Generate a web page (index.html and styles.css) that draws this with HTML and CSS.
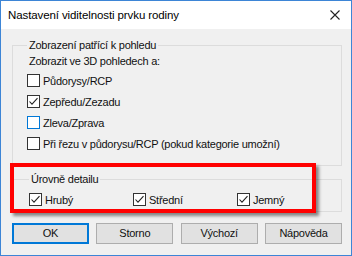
FILE: index.html
```html
<!DOCTYPE html>
<html lang="cs">
<head>
<meta charset="UTF-8">
<title>Nastavení viditelnosti prvku rodiny</title>
<link rel="stylesheet" href="styles.css">
</head>
<body>

<div class="window">
  <div class="titlebar">
    <span class="title">Nastavení viditelnosti prvku rodiny</span>
    <svg class="close" width="10" height="10" viewBox="0 0 10 10">
      <path d="M0.5 0.5 L9.5 9.5 M9.5 0.5 L0.5 9.5" stroke="#222" stroke-width="1.1" fill="none"/>
    </svg>
  </div>

  <div class="content">
    <fieldset class="group group-view">
      <legend>Zobrazení patřící k pohledu</legend>
      <div class="hint">Zobrazit ve 3D pohledech a:</div>
      <div class="check"><span class="box"></span>Půdorysy/RCP</div>
      <div class="check"><span class="box checked"><svg viewBox="0 0 11 11"><path d="M1.5 5.5 L4 8.2 L9.5 2.2" /></svg></span>Zepředu/Zezadu</div>
      <div class="check"><span class="box hover"></span>Zleva/Zprava</div>
      <div class="check"><span class="box"></span>Při řezu v půdorysu/RCP (pokud kategorie umožní)</div>
    </fieldset>

    <fieldset class="group group-detail">
      <legend>Úrovně detailu</legend>
      <div class="detail-row">
        <div class="check"><span class="box checked"><svg viewBox="0 0 11 11"><path d="M1.5 5.5 L4 8.2 L9.5 2.2" /></svg></span>Hrubý</div>
        <div class="check"><span class="box checked"><svg viewBox="0 0 11 11"><path d="M1.5 5.5 L4 8.2 L9.5 2.2" /></svg></span>Střední</div>
        <div class="check"><span class="box checked"><svg viewBox="0 0 11 11"><path d="M1.5 5.5 L4 8.2 L9.5 2.2" /></svg></span>Jemný</div>
      </div>
    </fieldset>

    <div class="buttons">
      <div class="btn btn-default">OK</div>
      <div class="btn">Storno</div>
      <div class="btn">Výchozí</div>
      <div class="btn">Nápověda</div>
    </div>
  </div>

  <!-- zvýraznění v návodu -->
  <div class="highlight"></div>
</div>

</body>
</html>
```

FILE: styles.css
```css
body {
  margin: 0;
  padding: 0;
  font-family: "Liberation Sans", Arial, sans-serif;
  font-size: 11px;
  letter-spacing: -0.25px;
  color: #111;
  background-color: #fff;
}

.window {
  position: relative;
  width: 350px;
  height: 254px;
  border: 1px solid #3d85d6;
  background-color: #f0f0f0;
  overflow: hidden;
}

.titlebar {
  height: 28px;
  background-color: #fff;
  display: flex;
  align-items: center;
  justify-content: space-between;
  padding: 0 11px 0 7px;
}

.title {
  font-size: 11.5px;
  letter-spacing: -0.1px;
  color: #000;
}

.content {
  padding: 9px 9px 0 11px;
}

.group {
  margin: 0;
  padding: 0 0 0 14px;
  border: 1px solid #dcdcdc;
  min-width: 0;
}

.group legend {
  padding: 0 2px;
  margin-left: 0;
  line-height: 15px;
}

.group-view {
  padding-bottom: 11px;
}

.hint {
  height: 17px;
  line-height: 17px;
  padding-left: 2px;
}

.check {
  display: flex;
  align-items: center;
  height: 21px;
}

.box {
  width: 11px;
  height: 11px;
  border: 1px solid #333;
  background-color: #fff;
  margin-right: 3px;
  flex: none;
  display: flex;
}

.box.hover {
  border-color: #0078d7;
}

.box svg {
  width: 11px;
  height: 11px;
}

.box svg path {
  fill: none;
  stroke: #222;
  stroke-width: 1.1;
}

.group-detail {
  margin-top: 6px;
  padding: 0 0 1px 16px;
}

.detail-row {
  display: flex;
  margin-top: 2px;
}

.detail-row .check {
  width: 105px;
}

.buttons {
  display: flex;
  justify-content: space-between;
  margin-top: 11px;
}

.btn {
  width: 75px;
  height: 19px;
  line-height: 19px;
  text-align: center;
  background-color: #e1e1e1;
  border: 1px solid #adadad;
}

.btn-default {
  border: 2px solid #0078d7;
  width: 73px;
  height: 17px;
  line-height: 17px;
}

.highlight {
  position: absolute;
  left: 9px;
  top: 162px;
  width: 298px;
  height: 42px;
  border: 4px solid #ff0000;
  box-shadow: 3px 3px 3px rgba(0, 0, 0, 0.45);
}
```
